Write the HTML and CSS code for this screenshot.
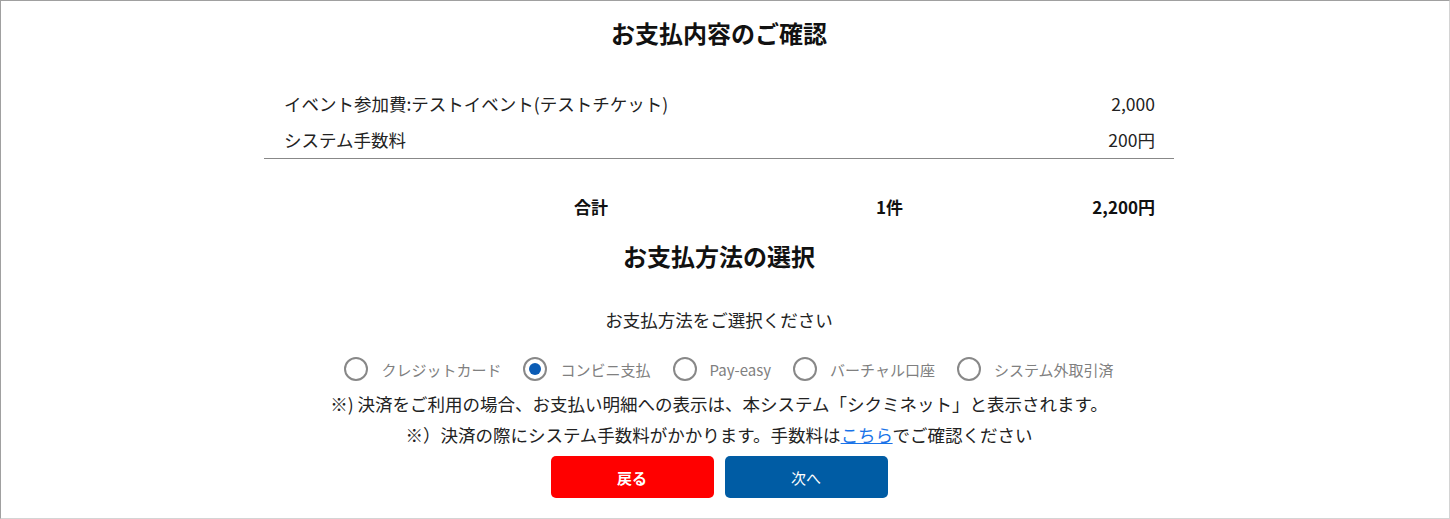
FILE: index.html
```html
<!DOCTYPE html>
<html lang="ja">
<head>
  <meta charset="UTF-8">
  <title>お支払内容のご確認</title>
  <link rel="stylesheet" href="styles.css">
</head>
<body>
  <div id="frame">
    <div id="content">
      <h2 class="title">お支払内容のご確認</h2>

      <div class="items">
        <div class="item">
          <span>イベント参加費:テストイベント(テストチケット)</span>
          <span>2,000</span>
        </div>
        <div class="item">
          <span>システム手数料</span>
          <span>200円</span>
        </div>
      </div>

      <div class="total">
        <span>合計</span>
        <span>1件</span>
        <span class="amount">2,200円</span>
      </div>

      <h2 class="title title-method">お支払方法の選択</h2>

      <p class="lead">お支払方法をご選択ください</p>

      <div class="methods">
        <label class="method"><span class="radio"></span>クレジットカード</label>
        <label class="method"><span class="radio checked"></span>コンビニ支払</label>
        <label class="method"><span class="radio"></span>Pay-easy</label>
        <label class="method"><span class="radio"></span>バーチャル口座</label>
        <label class="method"><span class="radio"></span>システム外取引済</label>
      </div>

      <p class="note">※) 決済をご利用の場合、お支払い明細への表示は、本システム「シクミネット」と表示されます。</p>
      <p class="note">※）決済の際にシステム手数料がかかります。手数料は<a href="#">こちら</a>でご確認ください</p>

      <div class="buttons">
        <button class="btn btn-back">戻る</button>
        <button class="btn btn-next">次へ</button>
      </div>
    </div>
  </div>
</body>
</html>
```

FILE: styles.css
```css
html, body {
  margin: 0;
  padding: 0;
  background: #fff;
}

body {
  font-family: "Noto Sans CJK JP", "Noto Sans", sans-serif;
  color: #222;
  font-size: 17.5px;
}

#frame {
  box-sizing: border-box;
  height: 519px;
  border-top: 1px solid #a0a0a0;
  border-left: 1px solid #a0a0a0;
  border-right: 1px solid #d4d4d4;
  border-bottom: 1px solid #d4d4d4;
  padding-right: 12px;
}

#content {
  width: 910px;
  margin: 0 auto;
}

.title {
  margin: 14px 0 0;
  font-size: 24px;
  line-height: 36px;
  font-weight: bold;
  color: #111;
  text-align: center;
}

.items {
  margin-top: 35px;
  border-bottom: 1px solid #888;
}

.item {
  display: flex;
  justify-content: space-between;
  height: 36px;
  line-height: 36px;
  padding: 0 19px 0 20px;
}

.total {
  display: grid;
  grid-template-columns: 302px 1fr auto;
  margin-top: 30px;
  padding: 0 19px 0 310px;
  line-height: 36px;
  font-size: 17px;
  font-weight: bold;
  color: #111;
}

.title-method {
  margin-top: 13px;
}

.lead {
  margin: 33px 0 0;
  line-height: 26px;
  text-align: center;
}

.methods {
  display: flex;
  justify-content: center;
  gap: 22px;
  margin-top: 21px;
  padding-left: 20px;
  height: 30px;
  align-items: center;
}

.method {
  display: flex;
  align-items: center;
  gap: 13px;
  font-size: 15px;
  color: #808080;
}

.radio {
  box-sizing: border-box;
  width: 24px;
  height: 24px;
  border: 2px solid #888;
  border-radius: 50%;
  display: flex;
  align-items: center;
  justify-content: center;
}

.radio.checked::after {
  content: "";
  width: 12px;
  height: 12px;
  border-radius: 50%;
  background: #0b5cb5;
}

.note {
  margin: 0;
  line-height: 31px;
  text-align: center;
}

.methods + .note {
  margin-top: 4px;
}

.note a {
  color: #1a73e8;
}

.buttons {
  display: flex;
  justify-content: center;
  gap: 11px;
  margin-top: 6px;
}

.btn {
  width: 163px;
  height: 42px;
  border: none;
  border-radius: 5px;
  color: #fff;
  font-family: inherit;
  font-size: 15px;
  cursor: pointer;
}

.btn-back {
  background: #ff0000;
  font-weight: bold;
}

.btn-next {
  background: #005ca4;
}
```
